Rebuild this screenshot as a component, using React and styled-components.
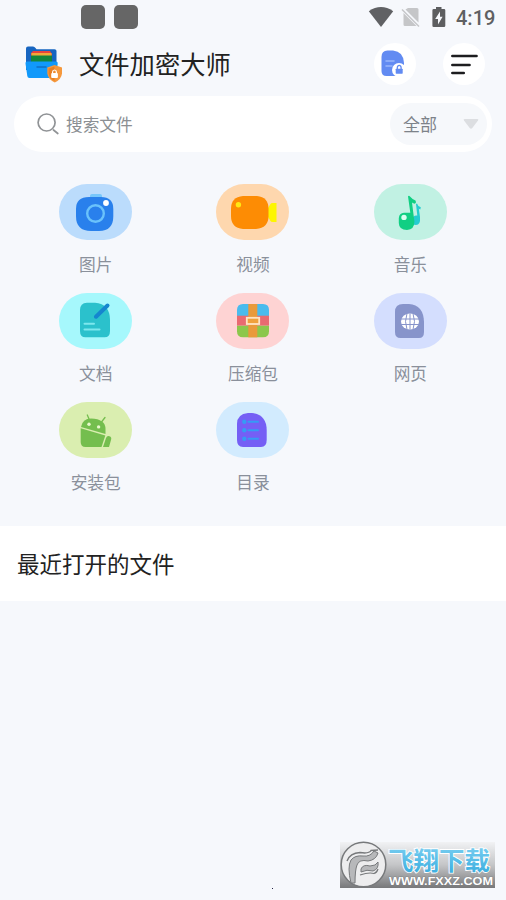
import styled, { createGlobalStyle } from "styled-components"

const GlobalStyle = createGlobalStyle`
* { box-sizing: border-box; }
body {
  margin: 0;
  background-color: #f6f8fc;
  font-family: "Noto Sans CJK SC", "Noto Sans", sans-serif;
}
svg { display: block; }
`

const Container = styled.div`
position: relative;
width: 506px;
height: 900px;
overflow: hidden;
background-color: #f6f8fc;
`

const StatusBar = styled.div`
height: 35px;
padding: 5px 12px 0 81px;
display: flex;
justify-content: space-between;
`
const Notices = styled.div`
display: flex;
gap: 9px;
`
const Notice = styled.div`
width: 24px;
height: 24px;
border-radius: 5px;
background-color: #666;
`
const System = styled.div`
display: flex;
align-items: flex-start;
`
const Clock = styled.div`
width: 38px;
margin-left: 10px;
font: 500 20px/26px Roboto, sans-serif;
color: #5f6062;
`

const Header = styled.div`
height: 61px;
padding: 0 21px 3px 24px;
display: flex;
align-items: center;
`
const Title = styled.h1`
margin: 0 auto 0 17px;
padding-bottom: 3px;
font-size: 25.3px;
font-weight: 400;
line-height: 36px;
color: #222;
`
const RoundButton = styled.div`
width: 42px;
height: 42px;
margin-left: ${props => props.$gap || 0}px;
border-radius: 50%;
background-color: #fff;
`

const Search = styled.div`
height: 56px;
margin: 0 14px;
padding: 0 5px 0 22px;
display: flex;
align-items: center;
border-radius: 28px;
background-color: #fff;
`
const Placeholder = styled.div`
flex: 1;
margin-left: 6px;
padding-bottom: 1px;
font-size: 16.7px;
line-height: 24px;
color: #8b8f93;
`
const Select = styled.div`
width: 97px;
height: 42px;
padding: 0 8px 1px 13px;
display: flex;
align-items: center;
justify-content: space-between;
border-radius: 21px;
background-color: #f6f8fb;
font-size: 17px;
line-height: 24px;
color: #7d8289;
`

const Grid = styled.div`
height: 374px;
padding: 32px 17px 0;
display: grid;
grid-template-columns: repeat(3, 1fr);
grid-auto-rows: 109px;
`
const Category = styled.div`
display: flex;
flex-direction: column;
align-items: center;
`
const Pill = styled.div`
width: 73px;
height: 56px;
border-radius: 28px;
background-color: ${props => props.$color};
`
const Label = styled.div`
margin-top: 11.500px;
font-size: 16.7px;
line-height: 24px;
color: #8a909b;
`

const Recent = styled.div`
height: 75px;
padding: 0 0 2px 17px;
display: flex;
align-items: center;
background-color: #fff;
font-size: 22.5px;
color: #222;
`

const Watermark = styled.div`
position: absolute;
left: 340px;
top: 841px;
`
const Speck = styled.div`
position: absolute;
left: 272px;
top: 888px;
width: 1px;
height: 1px;
background-color: #224;
`

const Wifi = () => (
  <svg width="26" height="24" viewBox="0 0 26 24">
    <path d="M.8 6.200Q13-2.200 25.200 6.200L13 22Z" fill="#606164" />
  </svg>
)

const NoSim = () => (
  <svg width="20" height="24" viewBox="0 0 20 24" style={{ marginLeft: "7px" }}>
    <path d="M7 3H16Q17.500 3 17.500 4.500V17.500L4.500 4.500ZM2.500 8V19.500Q2.500 21 4 21H15.500Z" fill="#c5c6c8" />
    <path d="M1 4.500L18 21.500" stroke="#c5c6c8" strokeWidth="1.500" />
  </svg>
)

const Battery = () => (
  <svg width="14" height="24" viewBox="0 0 14 24" style={{ marginLeft: "11px" }}>
    <path d="M4 2H9.500V4H12Q13.300 4 13.300 5.300V20.700Q13.300 22 12 22H1.700Q.4 22 .4 20.700V5.300Q.4 4 1.700 4H4Z" fill="#5d5e60" />
    <path d="M8 6.500L3.200 14H6V19.500L10.600 11.700H8Z" fill="#f6f8fc" />
  </svg>
)

const Logo = () => (
  <svg width="38" height="38" viewBox="0 0 38 38">
    <path d="M2 3.500Q2 1.500 4 1.500H9Q10.500 1.500 11.500 3L12.500 4.200H30.500Q32.500 4.200 32.500 6V25H2Z" fill="#1765c0" />
    <path d="M9 6H26L28 9V12H7V8Z" fill="#e7443d" />
    <path d="M7.500 8H27.500V11H7.500Z" fill="#f3a73a" />
    <path d="M7 10.500H28V17.500H7Z" fill="#14863b" />
    <path d="M3 16.500H32Q34 16.500 33.700 18.500L32.300 31Q32 33 30 33H5.500Q3.500 33 3.300 31L1.500 18.500Q1.300 16.500 3 16.500Z" fill="#1199fa" />
    <path d="M13 22H22" stroke="#116fc2" strokeWidth="1.500" strokeLinecap="round" />
    <path d="M30.500 20L38 22.600V28.500Q37.300 34.500 30.800 37.500Q24.300 34.500 23.300 28.500V22.600Z" fill="#f5983d" />
    <path d="M30.500 21.500V36Q25.200 33.200 24.600 28.500V23.500Z" fill="#e98024" />
    <rect x="27.200" y="28" width="6.700" height="5" rx="1" fill="#fff" />
    <path d="M28.600 28.500V27Q28.700 25 30.500 25T32.400 27V28.500" fill="none" stroke="#fff" strokeWidth="1.200" />
  </svg>
)

const LockedFile = () => (
  <svg width="42" height="42" viewBox="0 0 42 42">
    <path d="M13.500 7.500H19Q29.500 8.500 30 20V28Q30 33 24.500 33H12.500Q7.500 33 7.500 28V14Q7.500 7.500 13.500 7.500Z" fill="#628bf2" />
    <path d="M12 18H20M12 23H18" stroke="#9bb8fb" strokeWidth="1.500" strokeLinecap="round" />
    <circle cx="25" cy="27" r="7" fill="#fff" />
    <rect x="21.700" y="25.700" width="7" height="5" rx=".6" fill="#628bf2" />
    <path d="M23.300 26V24.500Q23.500 22.300 25.200 22.300T27.100 24.500V26" fill="none" stroke="#628bf2" strokeWidth="1.300" />
  </svg>
)

const MenuLines = () => (
  <svg width="42" height="42" viewBox="0 0 42 42">
    <path d="M9.400 13H33.500M9.400 22H26.500M9.400 30H20.700" stroke="#1d1d1f" strokeWidth="2.700" strokeLinecap="round" />
  </svg>
)

const Magnifier = () => (
  <svg width="24" height="24" viewBox="0 0 24 24">
    <circle cx="10.600" cy="10.500" r="8.500" fill="none" stroke="#909396" strokeWidth="1.700" />
    <path d="M17.500 18L21.800 21.500" stroke="#909396" strokeWidth="1.700" strokeLinecap="round" />
  </svg>
)

const Caret = () => (
  <svg width="16" height="12" viewBox="0 0 16 12">
    <path d="M1.500 1H14.500Q16 1 15 2.500L9.300 10Q8 11.500 6.700 10L1 2.500Q0 1 1.500 1Z" fill="#dcdee1" />
  </svg>
)

const Photo = () => (
  <>
    <rect x="31" y="10" width="12" height="6" rx="2" fill="#77c7fb" />
    <path d="M30 13H42Q54.300 13 54.300 25V32Q54.300 47 40 47H32Q17 47 17 32V25Q17 13 30 13Z" fill="#2980ec" />
    <circle cx="36.500" cy="29.500" r="8.300" fill="none" stroke="#6ac2fb" strokeWidth="2.400" />
    <circle cx="47" cy="19" r="2.900" fill="#fff" />
  </>
)

const Video = () => (
  <>
    <path d="M52 24L54.500 20Q55 19 56.500 19H60.500V38H56.500Q55 38 54.500 37L52 33Z" fill="#fdf600" />
    <path d="M27 12H41Q52.500 13 52.500 25V32Q52.500 44 40 45H27Q15 44 15 32V25Q15 13 27 12Z" fill="#fd8c04" />
    <circle cx="22.400" cy="20.700" r="2.700" fill="#ffe813" />
  </>
)

const Music = () => (
  <>
    <path d="M43 19.500Q44 22.700 46.800 23.300L46.300 25.500Q45 25 44.800 24.500L46 33Q46.700 41 42 41Q37.500 41 38 36Q38.500 31.500 42.500 31.500H43.300L42 20Z" fill="#25ccd0" />
    <path d="M34 12.300Q35 11.200 36 12.500Q38.500 15.500 41.500 16.500Q42.800 18.500 41 19.700Q39 19.500 38 18.500L40.400 37.500Q40.500 45.500 33 46Q25 46 24.800 39V34Q25.300 29 30 28.800H36.300Z" fill="#11cf83" />
    <circle cx="30" cy="33.400" r="2.700" fill="#d9fff0" />
  </>
)

const Document = () => (
  <>
    <path d="M28 9.700H36Q51 11 51 27V38Q51 44.300 45.500 44.300H26.500Q21 44.300 21 38V17Q21 10 28 9.700Z" fill="#2bc1cc" />
    <path d="M25.500 30.700H35M25.500 36.600H40.500" stroke="#7de7ed" strokeWidth="2" strokeLinecap="round" />
    <path d="M37 23.700L48.500 12.500" stroke="#1586cf" strokeWidth="4" strokeLinecap="round" />
    <path d="M35.300 25.300L36 21.500L39.200 24.700Z" fill="#1586cf" />
  </>
)

const Archive = () => (
  <>
    <path d="M21 23V17Q21 11 27 11H47Q53 11 53 17V23Z" fill="#4abbed" />
    <path d="M21 22.700H53V32.700H21Z" fill="#e96a71" />
    <path d="M21 32.700H53V38.300Q53 44.300 47 44.300H27Q21 44.300 21 38.300Z" fill="#8cc74c" />
    <path d="M32.300 11H41.300V44.300H32.300Z" fill="#e99a3b" />
    <rect x="30.800" y="24.800" width="12.400" height="6.200" fill="#f0a13c" stroke="#ffe4c4" strokeWidth="1.800" />
  </>
)

const Web = () => (
  <>
    <path d="M29 11H35Q49.500 12 50 29V39Q50 45 45 45H26.500Q21 45 21 39V19Q21 11 29 11Z" fill="#8794cb" />
    <ellipse cx="36" cy="28.500" rx="9" ry="8" fill="#fff" />
    <path d="M27 26H45M27 31.500H45M36 20.500V36.500M33 20.500Q30 28.500 33 36.500M39 20.500Q42 28.500 39 36.500" fill="none" stroke="#8794cb" strokeWidth="1" />
  </>
)

const Android = () => (
  <>
    <path d="M28.300 13L30.500 18M46 15.500L42.500 20" stroke="#74be4e" strokeWidth="1.300" strokeLinecap="round" />
    <path d="M22 25Q23.500 16.500 32 16.500Q46.500 17 46.500 27V32Z" fill="#74be4e" />
    <path d="M21.700 26.300L46.300 33.500L42.500 45H26.500Q21.700 45 21.700 40Z" fill="#74be4e" />
    <path d="M44 45L47 36Q48 33.500 50.500 34.300Q53 35.300 52 38L50 45Z" fill="#74be4e" />
    <circle cx="30" cy="22.200" r="1.700" fill="#e8f7cd" />
    <circle cx="39.600" cy="24.900" r="1.700" fill="#e8f7cd" />
  </>
)

const Directory = () => (
  <>
    <path d="M32 11H36Q50.500 13 50.700 28V38Q50.700 45 45 45H27Q21 45 21 38V22Q21 12 32 11Z" fill="#755ff5" />
    <path d="M32.500 19.700H42M32.500 28.200H42M32.500 36.700H42" stroke="#359bf5" strokeWidth="2" strokeLinecap="round" />
    <circle cx="28.300" cy="19.700" r="2.200" fill="#359bf5" />
    <circle cx="28.300" cy="28.200" r="2.200" fill="#359bf5" />
    <circle cx="28.300" cy="36.700" r="2.200" fill="#359bf5" />
  </>
)

const categories = [
  { name: "图片", color: "#bbdcfc", Icon: Photo },
  { name: "视频", color: "#fed7ae", Icon: Video },
  { name: "音乐", color: "#c1f1e3", Icon: Music },
  { name: "文档", color: "#a6f8fc", Icon: Document },
  { name: "压缩包", color: "#fed3d3", Icon: Archive },
  { name: "网页", color: "#d4defe", Icon: Web },
  { name: "安装包", color: "#daeeb0", Icon: Android },
  { name: "目录", color: "#d2ebfe", Icon: Directory },
]

const SiteMark = () => (
  <svg width="155" height="47" viewBox="0 0 155 47">
    <defs>
      <linearGradient id="plate" x1="0" y1="0" x2="0" y2="1">
        <stop offset="0" stopColor="#f1f2f4" />
        <stop offset=".5" stopColor="#c4c5c7" />
        <stop offset="1" stopColor="#77787a" />
      </linearGradient>
      <linearGradient id="sky" x1="0" y1="0" x2="0" y2="1">
        <stop offset="0" stopColor="#78cdf0" />
        <stop offset="1" stopColor="#39addf" />
      </linearGradient>
    </defs>
    <rect y="1" width="155" height="46" fill="url(#plate)" />
    <circle cx="23.500" cy="23.500" r="22.300" fill="#ededee" stroke="#77797b" strokeWidth="1.500" />
    <path d="M11 42Q7 26 11 19Q15 14 23 15Q30 16 34 10L38 12Q36 19 28 20Q19 18 17 24Q15 29 15 42Z" fill="#b7b8ba" stroke="#77797b" strokeWidth="1" />
    <path d="M7 20Q10 12 20 11.500Q29 13 31 9.500L38 9" fill="none" stroke="#77797b" strokeWidth="1.400" />
    <path d="M21 28Q23 23 30 25Q36 25 38 21Q39 28 33 30Q27 28 21 31Z" fill="#b7b8ba" stroke="#77797b" strokeWidth="1" />
    <path d="M20 34Q29 31 34 32.500Q37 31.500 38 28" fill="none" stroke="#77797b" strokeWidth="1.200" />
    <text x="48" y="28.500" textLength="102" fontFamily="Liberation Sans, Noto Sans CJK SC, sans-serif" fontSize="25.500" fontWeight="700" fill="url(#sky)" stroke="#fff" strokeWidth="1.800" paintOrder="stroke">飞翔下载</text>
    <text x="49" y="43.500" textLength="104" lengthAdjust="spacingAndGlyphs" fontFamily="Liberation Sans, sans-serif" fontSize="10.500" fontWeight="700" fill="#fff" stroke="#77797b" strokeWidth=".7" paintOrder="stroke">WWW.FXXZ.COM</text>
  </svg>
)

const App = () => {
  return (
    <Container>
      <GlobalStyle />
      <StatusBar>
        <Notices>
          <Notice />
          <Notice />
        </Notices>
        <System>
          <Wifi />
          <NoSim />
          <Battery />
          <Clock>4:19</Clock>
        </System>
      </StatusBar>
      <Header>
        <Logo />
        <Title>文件加密大师</Title>
        <RoundButton>
          <LockedFile />
        </RoundButton>
        <RoundButton $gap={27}>
          <MenuLines />
        </RoundButton>
      </Header>
      <Search>
        <Magnifier />
        <Placeholder>搜索文件</Placeholder>
        <Select>
          全部
          <Caret />
        </Select>
      </Search>
      <Grid>
        {categories.map(({ name, color, Icon }) => (
          <Category key={name}>
            <Pill $color={color}>
              <svg width="73" height="56" viewBox="0 0 73 56">
                <Icon />
              </svg>
            </Pill>
            <Label>{name}</Label>
          </Category>
        ))}
      </Grid>
      <Recent>最近打开的文件</Recent>
      <Speck />
      <Watermark>
        <SiteMark />
      </Watermark>
    </Container>
  )
}

export default App
